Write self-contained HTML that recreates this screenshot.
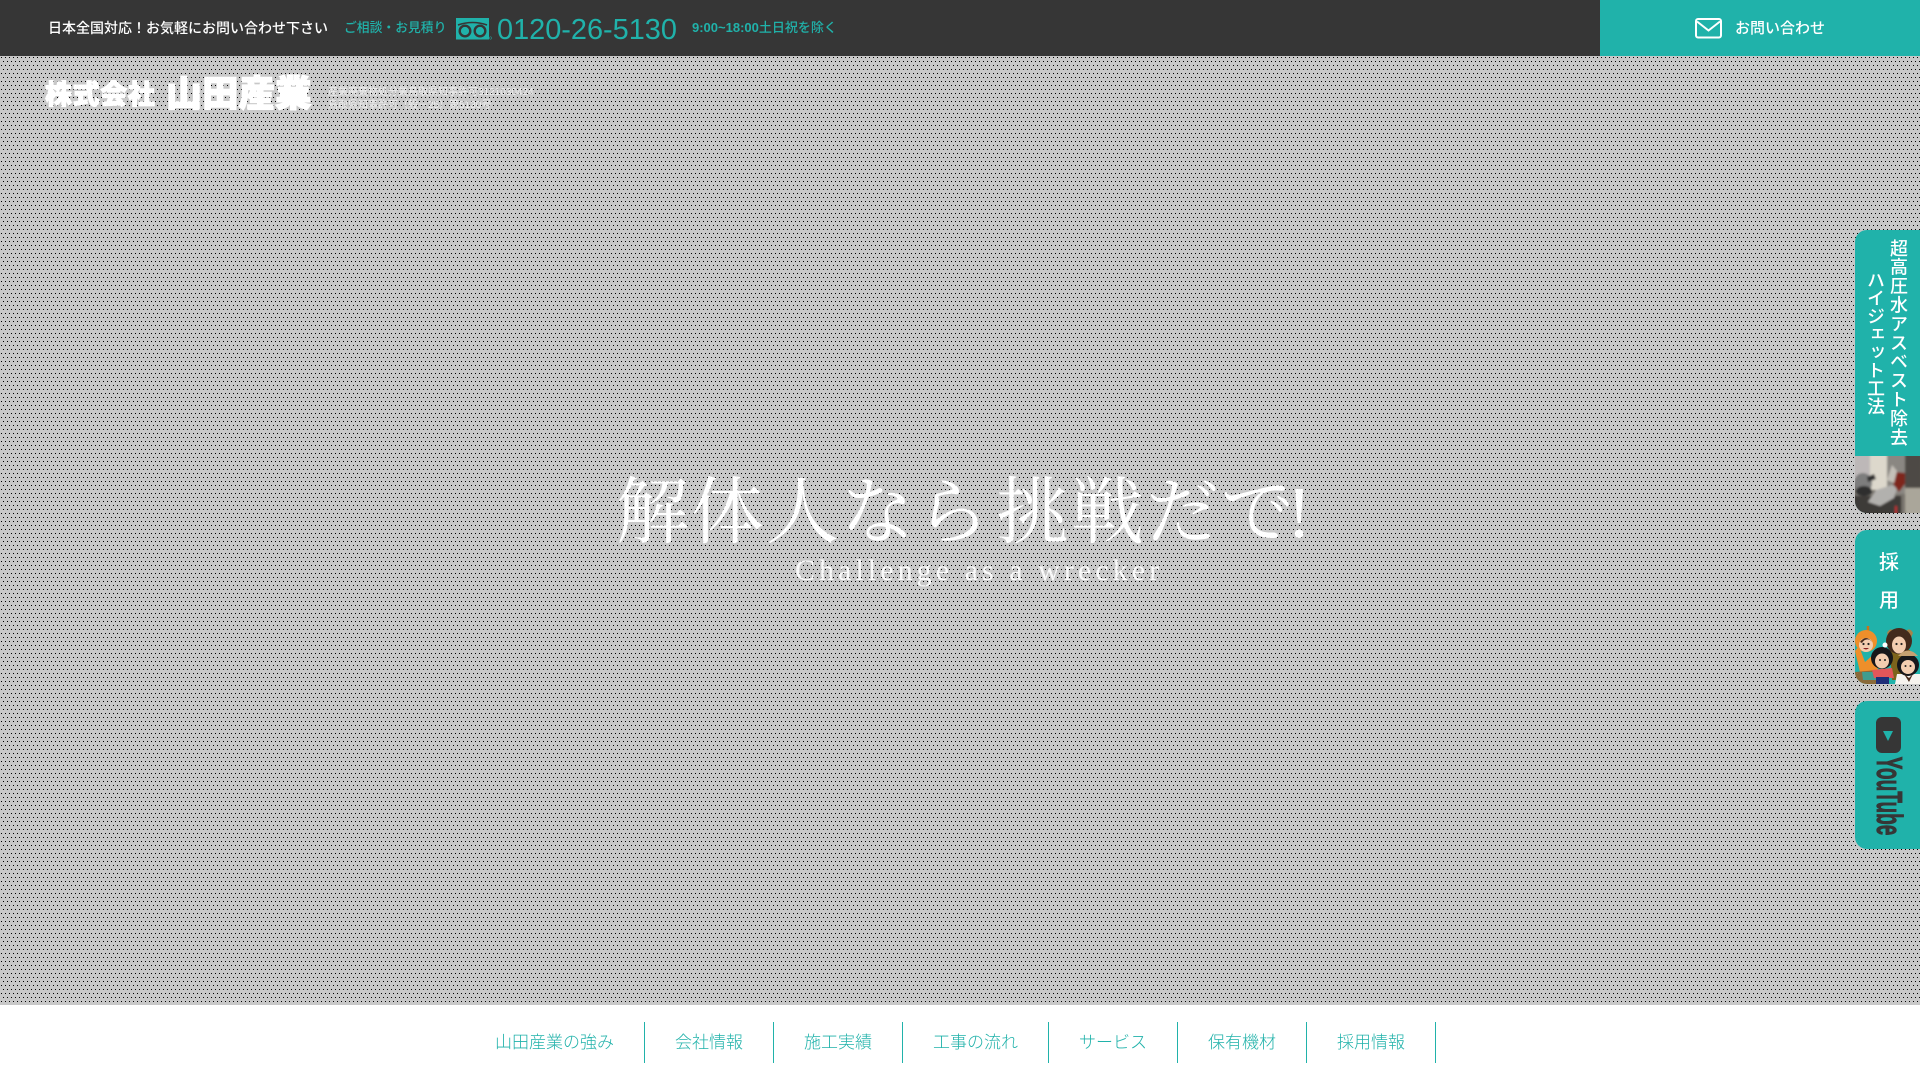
<!DOCTYPE html>
<html lang="ja"><head><meta charset="utf-8"><title>山田産業</title>
<style>
*{box-sizing:border-box;margin:0;padding:0}
html,body{width:1920px;height:1080px;overflow:hidden;background:#fff}
body{position:relative;font-family:"Liberation Sans","Noto Sans CJK JP",sans-serif}
.a{position:absolute;white-space:nowrap}
.t{color:#20b2aa}
.tab{position:absolute;left:1855px;width:65px;background:#20b2aa;border-radius:12px 0 0 12px;overflow:hidden}
.v{position:absolute;writing-mode:vertical-rl;color:#fff;white-space:nowrap;font-size:18px;line-height:24px;font-weight:500}
nav{position:absolute;left:465px;top:1022px;display:flex;height:41px}
nav span{display:block;padding:0 30px;border-right:1px solid #20b2aa;color:#20b2aa;font-size:17px;line-height:42px;white-space:nowrap;font-weight:300}
</style></head><body>
<svg class="a" style="left:0;top:56px" width="1920" height="949" shape-rendering="crispEdges"><defs><pattern id="d" width="4" height="8" patternUnits="userSpaceOnUse"><rect width="4" height="8" fill="#c8c8c8"/><rect x="1" y="1" width="1" height="1" fill="#000"/><rect x="3" y="5" width="1" height="1" fill="#000"/></pattern></defs><rect width="1920" height="949" fill="url(#d)"/></svg>

<div class="a" style="left:0;top:0;width:1600px;height:56px;background:#363636"></div>
<div class="a" style="left:1600px;top:0;width:320px;height:56px;background:#20b2aa"></div>
<div class="a" style="left:48px;top:18px;font-size:14px;line-height:20px;color:#fff;font-weight:500">日本全国対応！お気軽にお問い合わせ下さい</div>
<div class="a t" style="left:344px;top:18px;font-size:12.800px;line-height:19px;font-weight:500">ご相談・お見積り</div>
<svg class="a" style="left:456px;top:18px" width="36" height="22" viewBox="0 0 36 22"><rect width="33" height="21.500" fill="#20b2aa"/><path d="M2 7Q16.500 2 31 7" fill="none" stroke="#363636" stroke-width="1.600"/><circle cx="9" cy="13" r="5.300" fill="none" stroke="#363636" stroke-width="2.400"/><circle cx="24" cy="13" r="5.300" fill="none" stroke="#363636" stroke-width="2.400"/><circle cx="34.500" cy="20" r="1.200" fill="none" stroke="#20b2aa" stroke-width=".5"/></svg>
<div class="a t" style="left:497px;top:12px;font-size:28.900px;line-height:36px">0120-26-5130</div>
<div class="a t" style="left:692px;top:18px;font-size:13px;line-height:19px;font-weight:bold">9:00~18:00<span style="font-weight:500">土日祝を除く</span></div>
<svg class="a" style="left:1695px;top:18px" width="28" height="21" viewBox="0 0 28 21"><rect x="1" y="1" width="25" height="18.500" rx="2" fill="none" stroke="#fff" stroke-width="2"/><path d="M2 3.500L13.500 12.500L25 3.500" fill="none" stroke="#fff" stroke-width="2"/></svg>
<div class="a" style="left:1735px;top:18px;font-size:15px;line-height:22px;color:#fff;font-weight:500">お問い合わせ</div>

<div class="a" style="left:45px;top:78px;font-size:27px;line-height:34px;color:#fff;font-weight:900;-webkit-text-stroke:1px #fff;letter-spacing:.6px">株式会社</div>
<div class="a" style="left:166px;top:72px;font-size:36px;line-height:44px;letter-spacing:.4px;color:#fff;font-weight:900;-webkit-text-stroke:1.400px #fff">山田産業</div>
<div class="a" style="left:328px;top:87px;font-size:10px;line-height:12.500px;color:rgba(255,255,255,.7)">産業廃棄物処分業鳥取県知事許可3121030424<br>鳥取県知事許可（般－25）第5130号</div>

<div class="a" style="left:616px;top:458px;font-family:'Noto Serif CJK JP',serif;font-size:73px;line-height:96px;letter-spacing:2px;color:#fff;font-weight:400">解体人なら<span style="display:inline-block;width:5px"></span>挑戦だで<span style="font-family:'Liberation Serif',serif;margin-left:-9px">!</span></div>
<div class="a" style="left:795px;top:553px;font-family:'Liberation Serif',serif;font-size:30px;line-height:36px;letter-spacing:4.050px;color:rgba(255,255,255,.92)">Challenge as a wrecker</div>

<div class="tab" style="top:230px;height:283px">
<div class="v" style="left:31px;top:0;height:226px;text-align:center;letter-spacing:.9px">超高圧水アスベスト除去</div>
<div class="v" style="left:8px;top:0;height:226px;text-align:center">ハイジェット工法</div>
<svg class="a" style="left:0;top:226px" width="65" height="57" viewBox="5 6 65 57"><defs><filter id="b"><feGaussianBlur stdDeviation="1"/></filter></defs><rect x="0" y="0" width="75" height="70" fill="#77736c"/><g filter="url(#b)"><rect x="3" y="4" width="18" height="30" fill="#bdb8b8"/><rect x="20" y="4" width="18" height="36" fill="#ddd8cc"/><rect x="37" y="4" width="18" height="40" fill="#8a8782"/><rect x="55" y="4" width="17" height="34" fill="#4d4944"/><rect x="55" y="38" width="17" height="28" fill="#aaa69a"/><rect x="3" y="46" width="48" height="20" fill="#3d3a38"/><ellipse cx="13" cy="33" rx="9" ry="10" fill="#7d7d7d"/><ellipse cx="14" cy="41" rx="8" ry="5" fill="#2e2e2e"/><path d="M17 27L24 24L26 29L18 32Z" fill="#2f2f2f"/><path d="M18 52L26 40L42 35L47 38L44 48L30 56Z" fill="#b2b1ae"/><path d="M43 34L46 22L55 23L55 34L49 42Z" fill="#7e261a"/><path d="M37 30L42 15L47 21L44 33Z" fill="#c4c0b8"/><rect x="45" y="56" width="2" height="8" fill="#c03030"/></g></svg>
</div>

<div class="tab" style="top:530px;height:154px">
<div class="a" style="left:24px;top:21px;font-size:20px;line-height:24px;color:#fff;font-weight:500">採</div>
<div class="a" style="left:24px;top:59px;font-size:20px;line-height:24px;color:#fff;font-weight:500">用</div>
<svg class="a" style="left:0;top:90px" width="65" height="64" viewBox="5 0 65 64">
<path d="M5 31L9 26L15 42L24 34L28 50L10 52Z" fill="#ee8f2a"/><path d="M18 6L18 13" stroke="#c8741a" stroke-width="2.500"/><circle cx="16" cy="21" r="11" fill="#ee8f2a"/><circle cx="16" cy="25" r="7" fill="#f3cdb0"/><path d="M10 22Q16 14 22 22L20 20Q15 18 12 23Z" fill="#4a2c1c"/><circle cx="13.500" cy="24" r="1.100" fill="#222"/><circle cx="18.500" cy="24" r="1.100" fill="#222"/><path d="M13 28Q16 31 19 28Z" fill="#822"/>
<path d="M5 52L28 50L30 64L5 64Z" fill="#8a6a3a"/><path d="M12 52L28 52L26 60L13 60Z" fill="#3f9d8f"/>
<path d="M40 30L60 30L60 60L42 60Z" fill="#7d641c"/><path d="M37 13Q40 7 44 11L40 20ZM63 13Q60 7 56 11L60 20Z" fill="#a7834a"/><circle cx="49" cy="21" r="13" fill="#432a1c"/><ellipse cx="49" cy="25" rx="7" ry="8.500" fill="#f3cdb0"/><circle cx="46.500" cy="24" r="1.100" fill="#222"/><circle cx="51.500" cy="24" r="1.100" fill="#222"/>
<path d="M22 50L42 48L44 58L24 58Z" fill="#e2565a"/><rect x="26" y="57" width="13" height="7" fill="#1f2e78"/><circle cx="32" cy="38" r="11" fill="#17171a"/><ellipse cx="32" cy="41" rx="7" ry="7.500" fill="#f3cdb0"/><circle cx="30" cy="40" r="1" fill="#222"/><circle cx="35" cy="40" r="1" fill="#222"/><circle cx="35" cy="25" r="2.500" fill="#fff"/>
<path d="M47 54L70 54L70 64L45 64Z" fill="#f6f3ee"/><circle cx="58" cy="45" r="11" fill="#17171a"/><ellipse cx="58" cy="47" rx="7" ry="7" fill="#f3cdb0"/><path d="M48 36Q58 25 68 36Z" fill="#c5a172"/><circle cx="55.500" cy="46" r="1" fill="#222"/><circle cx="60.500" cy="46" r="1" fill="#222"/><path d="M54 54L59 58L63 54L59 62Z" fill="#4a2c1c"/>
</svg>
</div>

<div class="tab" style="top:701px;height:148px">
<div class="a" style="left:21px;top:16px;width:25px;height:36px;background:#363636;border-radius:6px"></div>
<div class="a" style="left:28px;top:30px;width:0;height:0;border-left:5.500px solid transparent;border-right:5.500px solid transparent;border-top:10px solid #20b2aa"></div>
<div class="a" style="left:33.500px;top:94.500px;width:0;height:0"><span style="position:absolute;left:0;top:0;transform:translate(-50%,-50%) rotate(90deg) scaleX(.53);font-size:36px;line-height:36px;color:#363636;font-weight:bold;-webkit-text-stroke:.9px #363636;display:block">YouTube</span></div>
</div>

<nav><span>山田産業の強み</span><span>会社情報</span><span>施工実績</span><span>工事の流れ</span><span>サービス</span><span>保有機材</span><span>採用情報</span></nav>
</body></html>
